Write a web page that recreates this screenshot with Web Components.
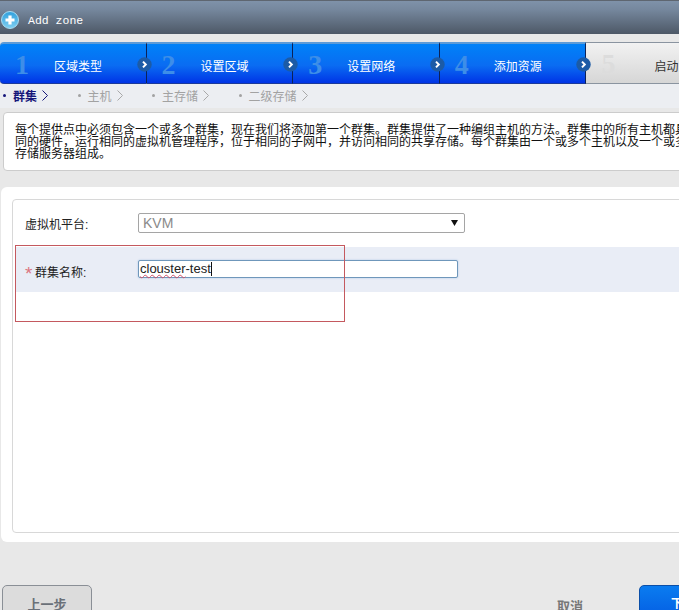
<!DOCTYPE html>
<html>
<head>
<meta charset="utf-8">
<title>Add zone</title>
<style>
  html, body { margin: 0; padding: 0; height: 610px; overflow: hidden; background: #e8e8e8; }
  body { font-family: "Liberation Sans", "Noto Sans CJK SC", sans-serif; }
  zone-wizard { width: 733px; }
</style>
</head>
<body>
<zone-wizard>
  <wiz-title>Add zone</wiz-title>
  <wiz-steps>
    <wiz-step num="1" active>区域类型</wiz-step>
    <wiz-step num="2" active>设置区域</wiz-step>
    <wiz-step num="3" active>设置网络</wiz-step>
    <wiz-step num="4" active last>添加资源</wiz-step>
    <wiz-step num="5">启动</wiz-step>
  </wiz-steps>
  <wiz-substeps>
    <wiz-sub active>群集</wiz-sub>
    <wiz-sub>主机</wiz-sub>
    <wiz-sub>主存储</wiz-sub>
    <wiz-sub>二级存储</wiz-sub>
  </wiz-substeps>
  <wiz-desc>每个提供点中必须包含一个或多个群集，现在我们将添加第一个群集。群集提供了一种编组主机的方法。群集中的所有主机都具有相同的硬件，运行相同的虚拟机管理程序，位于相同的子网中，并访问相同的共享存储。每个群集由一个或多个主机以及一个或多个主存储服务器组成。</wiz-desc>
  <wiz-form>
    <form-row label="虚拟机平台:">
      <fake-select>KVM</fake-select>
    </form-row>
    <form-row label="群集名称:" required shaded>
      <fake-input></fake-input>
    </form-row>
  </wiz-form>
  <wiz-footer></wiz-footer>
</zone-wizard>
<script>
class ZoneWizard extends HTMLElement {
  constructor() {
    super();
    this.attachShadow({ mode: "open" });
    this.shadowRoot.innerHTML = `
      <style>
        :host { display: block; position: relative; height: 610px; background: #e8e8e8; }
        .mark { position: absolute; left: 15px; top: 245px; width: 328px; height: 75px; border: 1px solid #c4595f; }
      </style>
      <slot></slot>
      <div class="mark"></div>
    `;
  }
}

class WizTitle extends HTMLElement {
  constructor() {
    super();
    this.attachShadow({ mode: "open" });
    this.shadowRoot.innerHTML = `
      <style>
        :host {
          display: flex; align-items: center; gap: 9px; height: 34px; padding: 5px 0 0 1px; box-sizing: border-box;
          background: linear-gradient(#7f92a9, #76889e 25%, #4d5866);
          border-top: 1px solid #5e6670;
          color: #fff; font: 11.5px "Liberation Mono", monospace;
        }
        svg { display: block; }
      </style>
      <svg width="18" height="18" viewBox="0 0 18 18">
        <defs>
          <linearGradient id="g" x1="0" y1="0" x2="0" y2="1">
            <stop offset="0" stop-color="#2f9fdc"/><stop offset="1" stop-color="#7fd0f2"/>
          </linearGradient>
        </defs>
        <circle cx="9" cy="9" r="8.5" fill="url(#g)" stroke="#a8dcf2" stroke-width="1"/>
        <path d="M9 4.5v9M4.5 9h9" stroke="#fff" stroke-width="3.2"/>
      </svg>
      <slot></slot>
    `;
  }
}

class WizSteps extends HTMLElement {
  constructor() {
    super();
    this.attachShadow({ mode: "open" });
    this.shadowRoot.innerHTML = `
      <style>
        :host { display: grid; grid-template-columns: repeat(5, 146.6px); height: 42px; margin-top: 8px; }
      </style>
      <slot></slot>
    `;
  }
}

class WizStep extends HTMLElement {
  constructor() {
    super();
    this.attachShadow({ mode: "open" });
    const num = this.getAttribute("num");
    this.shadowRoot.innerHTML = `
      <style>
        :host {
          display: flex; align-items: center; position: relative; height: 42px; box-sizing: border-box;
          padding-left: 15px; color: #333; font-size: 12px;
          background: linear-gradient(#f2f2f2, #d6d6d6);
          border-top: 1px solid #8a94a0; border-bottom: 1px solid #8a94a0;
        }
        :host([active]) {
          background: linear-gradient(#0082f8, #0a6cf2 55%, #0034e6);
          border-top: 2px solid #5b9bd8; border-bottom: 1px solid #1b3a9a;
          border-right: 1px solid #0b2258;
          color: #fff;
        }
        :host([num="1"]) { border-radius: 4px 0 0 4px; }
        .num { font: bold 28px "Liberation Serif", serif; color: #dcdcdc; width: 38px; margin-top: 2px; }
        :host([active]) .num { color: #3d8ee8; }
        .label { width: 48px; margin-left: 1px; white-space: nowrap; text-align: left; margin-top: 4px; }
        :host([num="5"]) .label { margin-left: 15px; }
        .arrow { position: absolute; right: -6px; top: 13px; z-index: 2; display: none; }
        :host([active]) .arrow { display: block; }
      </style>
      <span class="num">${num}</span>
      <span class="label"><slot></slot></span>
      <svg class="arrow" width="15" height="15" viewBox="0 0 15 15">
        <circle cx="7.5" cy="7.5" r="7.2" fill="#1c5ba6"/>
        <path d="M6 4.6l2.8 2.9L6 10.4" fill="none" stroke="#fff" stroke-width="2"/>
      </svg>
    `;
  }
}

class WizSubsteps extends HTMLElement {
  constructor() {
    super();
    this.attachShadow({ mode: "open" });
    this.shadowRoot.innerHTML = `
      <style>
        :host {
          display: flex; gap: 29.5px; height: 24px; padding: 0 0 2px 2px; box-sizing: border-box; align-items: center;
          background: #eceef2; font-size: 12px; color: #a2a2a2;
        }
      </style>
      <slot></slot>
    `;
  }
}

class WizSub extends HTMLElement {
  constructor() {
    super();
    this.attachShadow({ mode: "open" });
    this.shadowRoot.innerHTML = `
      <style>
        :host { display: flex; align-items: center; white-space: nowrap; }
        .dot { width: 3px; height: 3px; border-radius: 50%; background: #a2a2a2; margin: 0 7px 0 1px; }
        :host([active]) .dot { background: #16167a; }
        :host([active]) { color: #16167a; font-weight: bold; }
        svg { margin-left: 5px; margin-right: -1px; }
        path { fill: none; stroke: #a8a8a8; stroke-width: 1; }
        :host([active]) path { stroke: #16167a; }
      </style>
      <span class="dot"></span>
      <slot></slot>
      <svg width="6" height="11" viewBox="0 0 6 11"><path d="M.5 .5l5 5-5 5"/></svg>
    `;
  }
}

class WizDesc extends HTMLElement {
  constructor() {
    super();
    this.attachShadow({ mode: "open" });
    this.shadowRoot.innerHTML = `
      <style>
        :host {
          display: block; box-sizing: border-box; height: 59px; margin: 4px -40px 0 3px; padding: 11px 0 0 11px;
          background: #fff; border: 1px solid #ccc; border-radius: 4px;
          font-size: 12px; line-height: 12px; color: #111;
        }
        div { width: 700px; }
      </style>
      <div><slot></slot></div>
    `;
  }
}

class WizForm extends HTMLElement {
  constructor() {
    super();
    this.attachShadow({ mode: "open" });
    this.shadowRoot.innerHTML = `
      <style>
        :host {
          display: block; box-sizing: border-box; height: 355px; margin: 16px -40px 0 1px; padding: 12px 0 9px 11px;
          background: #fff; border-radius: 6px;
        }
        .inner {
          box-sizing: border-box; height: 100%; padding: 3px 0 0 3px;
          border: 1px solid #d8d8d8; border-radius: 4px;
        }
      </style>
      <div class="inner"><slot></slot></div>
    `;
  }
}

class FormRow extends HTMLElement {
  constructor() {
    super();
    this.attachShadow({ mode: "open" });
    const label = this.getAttribute("label");
    this.shadowRoot.innerHTML = `
      <style>
        :host {
          display: flex; align-items: center; height: 44px; box-sizing: border-box; padding-left: 9px;
          font-size: 12px; color: #222;
        }
        :host([shaded]) { background: #e9edf6; height: 45px; }
        .label { width: 113px; white-space: nowrap; margin-top: -3px; }
        .star { display: none; color: #dc7680; width: 10px; font-size: 19px; line-height: 12px; vertical-align: -3px; }
        :host([required]) .star { display: inline-block; }
        :host([required]) .label { margin-top: 3px; }
      </style>
      <span class="label"><span class="star">*</span>${label}</span>
      <slot></slot>
    `;
  }
}

class FakeSelect extends HTMLElement {
  constructor() {
    super();
    this.attachShadow({ mode: "open" });
    this.shadowRoot.innerHTML = `
      <style>
        :host {
          display: flex; align-items: center; justify-content: space-between; box-sizing: border-box;
          width: 327px; height: 20px; padding: 0 6px 0 4px; margin-top: -4px;
          background: #fff; border: 1px solid #a5a5a5; border-radius: 2px;
          font-size: 14px; color: #8a8a8a;
        }
      </style>
      <span><slot></slot></span>
      <svg width="7" height="6" viewBox="0 0 7 6"><path d="M0 0h7L3.5 6z" fill="#111"/></svg>
    `;
  }
}

class FakeInput extends HTMLElement {
  constructor() {
    super();
    this.attachShadow({ mode: "open" });
    this.shadowRoot.innerHTML = `
      <style>
        :host {
          display: flex; align-items: center; box-sizing: border-box;
          width: 320px; height: 18px; padding: 0 0 0 1px; margin-top: -2px;
          background: #fff; border: 1px solid #6f97bb; border-radius: 2px;
          box-shadow: 0 0 2px #a9c6e2;
          font-size: 13px; color: #222;
        }
        .typo { text-decoration: underline wavy #d0506a 1px; }
        .caret { display: inline-block; width: 1px; height: 14px; background: #111; }
      </style>
      <span><span class="typo">clouster</span>-test</span><span class="caret"></span>
    `;
  }
}

class WizFooter extends HTMLElement {
  constructor() {
    super();
    this.attachShadow({ mode: "open" });
    this.shadowRoot.innerHTML = `
      <style>
        :host {
          display: flex; align-items: flex-start; height: 68px; box-sizing: border-box;
          padding: 43px 0 0 2px; font-size: 13px; font-weight: bold;
        }
        .btn, .cancel { flex: none; }
        .btn {
          box-sizing: border-box; height: 40px; padding-top: 8px; text-align: center; border-radius: 5px;
        }
        .prev { width: 90px; background: #dcdcdc; border: 1px solid #8a8f96; color: #6a7078; }
        .cancel { margin-left: 465px; width: 26px; padding-top: 11px; color: #777; white-space: nowrap; }
        .next {
          width: 100px; margin-left: 56px; color: #fff;
          background: linear-gradient(#0a7cf0, #0358e0); border: 1px solid #0b4fa8; font-size: 12px;
        }
      </style>
      <div class="btn prev">上一步</div>
      <div class="cancel">取消</div>
      <div class="btn next">下一步</div>
    `;
  }
}

customElements.define("zone-wizard", ZoneWizard);
customElements.define("wiz-title", WizTitle);
customElements.define("wiz-steps", WizSteps);
customElements.define("wiz-step", WizStep);
customElements.define("wiz-substeps", WizSubsteps);
customElements.define("wiz-sub", WizSub);
customElements.define("wiz-desc", WizDesc);
customElements.define("wiz-form", WizForm);
customElements.define("form-row", FormRow);
customElements.define("fake-select", FakeSelect);
customElements.define("fake-input", FakeInput);
customElements.define("wiz-footer", WizFooter);
</script>
</body>
</html>
